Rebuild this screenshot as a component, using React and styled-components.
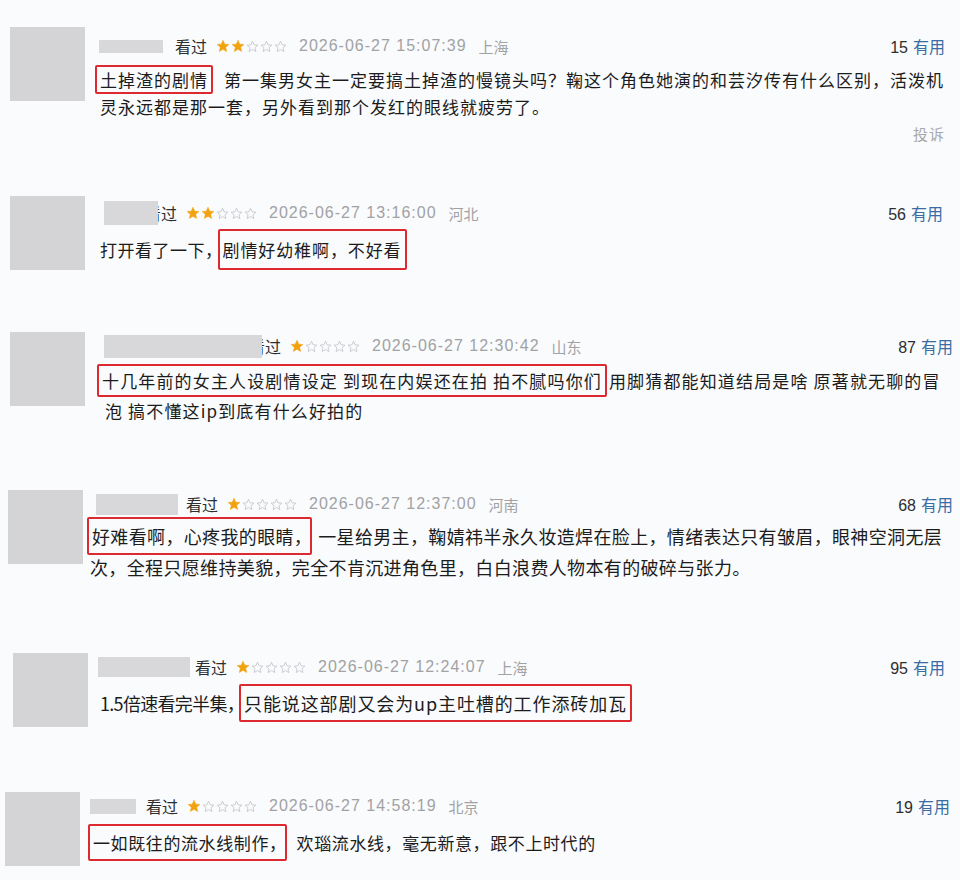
import styled, { createGlobalStyle } from "styled-components";

const GlobalStyle = createGlobalStyle`
  html, body {
    margin: 0;
    padding: 0;
    background: #f9fbfd;
  }
  body {
    font-family: "Liberation Sans", "Noto Sans CJK SC", sans-serif;
  }
`;

const Page = styled.div`
  width: 960px;
  height: 880px;
  overflow: hidden;
  background: #f9fbfd;
  display: flex;
  flex-direction: column;
`;

const Card = styled.div`
  box-sizing: border-box;
  height: ${(p) => p.h}px;
  padding: ${(p) => p.top}px ${(p) => p.right}px 0 ${(p) => p.left}px;
  display: flex;
  align-items: flex-start;
  gap: ${(p) => p.gap}px;
  flex-shrink: 0;
`;

const Avatar = styled.div`
  width: 75px;
  height: 74px;
  background: #d4d4d6;
  flex-shrink: 0;
`;

const Body = styled.div`
  flex: 1;
  min-width: 0;
  padding-top: ${(p) => p.headTop}px;
`;

const Header = styled.div`
  height: 28px;
  display: flex;
  align-items: center;
`;

const NameBox = styled.div`
  position: relative;
  z-index: 1;
  width: ${(p) => p.w}px;
  height: ${(p) => p.h}px;
  margin-left: ${(p) => p.ml}px;
  margin-right: ${(p) => (p.cut ? -13 : p.mr)}px;
  background: #d8d8da;
  flex-shrink: 0;
`;

const Seen = styled.span`
  font-family: "Noto Sans CJK SC", sans-serif;
  font-size: 16px;
  color: #2e2e2e;
  margin-right: 9px;
`;

const Stars = styled.span`
  display: inline-flex;
  align-items: center;
  gap: 1px;
  margin-right: 12px;
`;

const StarSvg = styled.svg`
  width: ${(p) => (p.on ? 14 : 13)}px;
  height: ${(p) => (p.on ? 14 : 13)}px;
  path {
    fill: ${(p) => (p.on ? "#f3a20f" : "none")};
    stroke: ${(p) => (p.on ? "#f3a20f" : "#c4c6cb")};
    stroke-width: ${(p) => (p.on ? 1 : 1.6)};
    stroke-linejoin: round;
  }
`;

const DateText = styled.span`
  font-family: "Liberation Sans", sans-serif;
  font-size: 16px;
  letter-spacing: 1px;
  color: #a2a2a4;
`;

const Loc = styled.span`
  font-family: "Noto Sans CJK SC", sans-serif;
  font-size: 15px;
  color: #a2a2a4;
  margin-left: 12px;
`;

const Useful = styled.span`
  margin-left: auto;
  font-family: "Liberation Sans", "Noto Sans CJK SC", sans-serif;
  font-size: 16px;
  color: #2e2e2e;
  white-space: nowrap;
  b {
    font-weight: normal;
    color: #3a6ca3;
    margin-left: 5px;
    font-family: "Noto Sans CJK SC", sans-serif;
  }
`;

const TextBlock = styled.div`
  margin-top: ${(p) => p.mt}px;
  font-family: "Noto Sans CJK SC", sans-serif;
  font-size: ${(p) => p.fs}px;
  letter-spacing: ${(p) => p.ls}px;
  line-height: ${(p) => p.lh}px;
  color: #1c1c1c;
`;

const Line = styled.div`
  white-space: nowrap;
  padding-left: ${(p) => p.pl}px;
`;

const Before = styled.span`
  letter-spacing: ${(p) => (p.ls == null ? "inherit" : `${p.ls}px`)};
`;

const Mark = styled.span`
  border: 2px solid #dc2a30;
  border-radius: 2px;
  padding: ${(p) => p.py}px 3px;
  margin-right: ${(p) => p.gap}px;
`;

// full-width comma whose empty right half the red box sits on, as in the screenshot
const Tight = styled.span`
  margin-right: -5px;
`;

const Report = styled.div`
  margin-top: 4px;
  text-align: right;
  font-family: "Noto Sans CJK SC", sans-serif;
  font-size: 15px;
  letter-spacing: 1px;
  line-height: 20px;
  color: #a8a8aa;
`;

const STAR = "M12 2.2l2.9 6.6 7.1.7-5.4 4.8 1.6 7-6.2-3.7-6.2 3.7 1.6-7L2 9.5l7.1-.7z";

const Rating = ({ n }) => (
  <Stars>
    {[0, 1, 2, 3, 4].map((i) => (
      <StarSvg key={i} on={i < n ? 1 : 0} viewBox="0 0 24 24">
        <path d={STAR} />
      </StarSvg>
    ))}
  </Stars>
);

const withTight = (s, tight) =>
  tight ? (
    <>
      {s.slice(0, -1)}
      <Tight>{s.slice(-1)}</Tight>
    </>
  ) : (
    s
  );

const comments = [
  {
    h: 170, top: 27, left: 10, gap: 10, right: 15,
    nameW: 64, nameH: 13, nameMl: 4, nameMr: 12, cut: false,
    stars: 2, date: "2026-06-27 15:07:39", loc: "上海", useful: 15,
    headTop: 5, textTop: 6, fs: 17, ls: 1.0, lh: 27, py: 0, pl: 5, markGap: 11,
    lines: [
      { mark: "土掉渣的剧情", text: "第一集男女主一定要搞土掉渣的慢镜头吗？鞠这个角色她演的和芸汐传有什么区别，活泼机" },
      { text: "灵永远都是那一套，另外看到那个发红的眼线就疲劳了。" },
    ],
    report: true,
  },
  {
    h: 140, top: 26, left: 10, gap: 15, right: 17,
    nameW: 54, nameH: 24, nameMl: 4, nameMr: 11, cut: true,
    stars: 2, date: "2026-06-27 13:16:00", loc: "河北", useful: 56,
    headTop: 3, textTop: 8, fs: 17, ls: 0.9, lh: 30, py: 6, pl: 0, markGap: 0,
    lines: [{ before: "打开看了一下，", beforeLs: 0.5, tightBefore: true, mark: "剧情好幼稚啊，不好看" }],
  },
  {
    h: 160, top: 22, left: 10, gap: 12, right: 7,
    nameW: 158, nameH: 23, nameMl: 7, nameMr: 11, cut: true,
    stars: 1, date: "2026-06-27 12:30:42", loc: "山东", useful: 87,
    headTop: 0, textTop: 6, fs: 17, ls: 1.15, lh: 30, py: 2, pl: 8, markGap: 2,
    lines: [
      { mark: "十几年前的女主人设剧情设定 到现在内娱还在拍 拍不腻吗你们", text: "用脚猜都能知道结局是啥 原著就无聊的冒" },
      { text: "泡 搞不懂这ip到底有什么好拍的" },
    ],
  },
  {
    h: 160, top: 20, left: 8, gap: 4, right: 7,
    nameW: 82, nameH: 21, nameMl: 9, nameMr: 8, cut: false,
    stars: 1, date: "2026-06-27 12:37:00", loc: "河南", useful: 68,
    headTop: 0, textTop: 3, fs: 18, ls: 0.35, lh: 31, py: 4, pl: 3, markGap: 6,
    lines: [
      { mark: "好难看啊，心疼我的眼睛，", tightMark: true, text: "一星给男主，鞠婧祎半永久妆造焊在脸上，情绪表达只有皱眉，眼神空洞无层" },
      { text: "次，全程只愿维持美貌，完全不肯沉进角色里，白白浪费人物本有的破碎与张力。" },
    ],
  },
  {
    h: 145, top: 23, left: 13, gap: 10, right: 15,
    nameW: 92, nameH: 20, nameMl: 0, nameMr: 5, cut: false,
    stars: 1, date: "2026-06-27 12:24:07", loc: "上海", useful: 95,
    headTop: 0, textTop: 7, fs: 18, ls: 0.9, lh: 30, py: 4, pl: 2, markGap: 0,
    lines: [{ before: "1.5倍速看完半集，", beforeLs: -0.7, tightBefore: true, mark: "只能说这部剧又会为up主吐槽的工作添砖加瓦" }],
  },
  {
    h: 105, top: 17, left: 5, gap: 8, right: 10,
    nameW: 46, nameH: 15, nameMl: 2, nameMr: 10, cut: false,
    stars: 1, date: "2026-06-27 14:58:19", loc: "北京", useful: 19,
    headTop: 0, textTop: 8, fs: 17, ls: 0.6, lh: 30, py: 4, pl: 0, markGap: 10,
    lines: [{ mark: "一如既往的流水线制作，", tightMark: true, text: "欢瑙流水线，毫无新意，跟不上时代的" }],
  },
];

const Comment = ({ c }) => (
  <Card h={c.h} top={c.top} left={c.left} gap={c.gap} right={c.right}>
    <Avatar />
    <Body headTop={c.headTop}>
      <Header>
        <NameBox w={c.nameW} h={c.nameH} ml={c.nameMl} mr={c.nameMr} cut={c.cut ? 1 : 0} />
        <Seen>看过</Seen>
        <Rating n={c.stars} />
        <DateText>{c.date}</DateText>
        <Loc>{c.loc}</Loc>
        <Useful>
          {c.useful}
          <b>有用</b>
        </Useful>
      </Header>
      <TextBlock mt={c.textTop} fs={c.fs} ls={c.ls} lh={c.lh}>
        {c.lines.map((l, i) => (
          <Line key={i} pl={l.mark && !l.before ? 0 : c.pl}>
            {l.before && <Before ls={l.beforeLs}>{withTight(l.before, l.tightBefore)}</Before>}
            {l.mark && (
              <Mark py={c.py} gap={c.markGap}>
                {withTight(l.mark, l.tightMark)}
              </Mark>
            )}
            {l.text}
          </Line>
        ))}
      </TextBlock>
      {c.report && <Report>投诉</Report>}
    </Body>
  </Card>
);

export default function App() {
  return (
    <>
      <GlobalStyle />
      <Page>
        {comments.map((c, i) => (
          <Comment key={i} c={c} />
        ))}
      </Page>
    </>
  );
}
